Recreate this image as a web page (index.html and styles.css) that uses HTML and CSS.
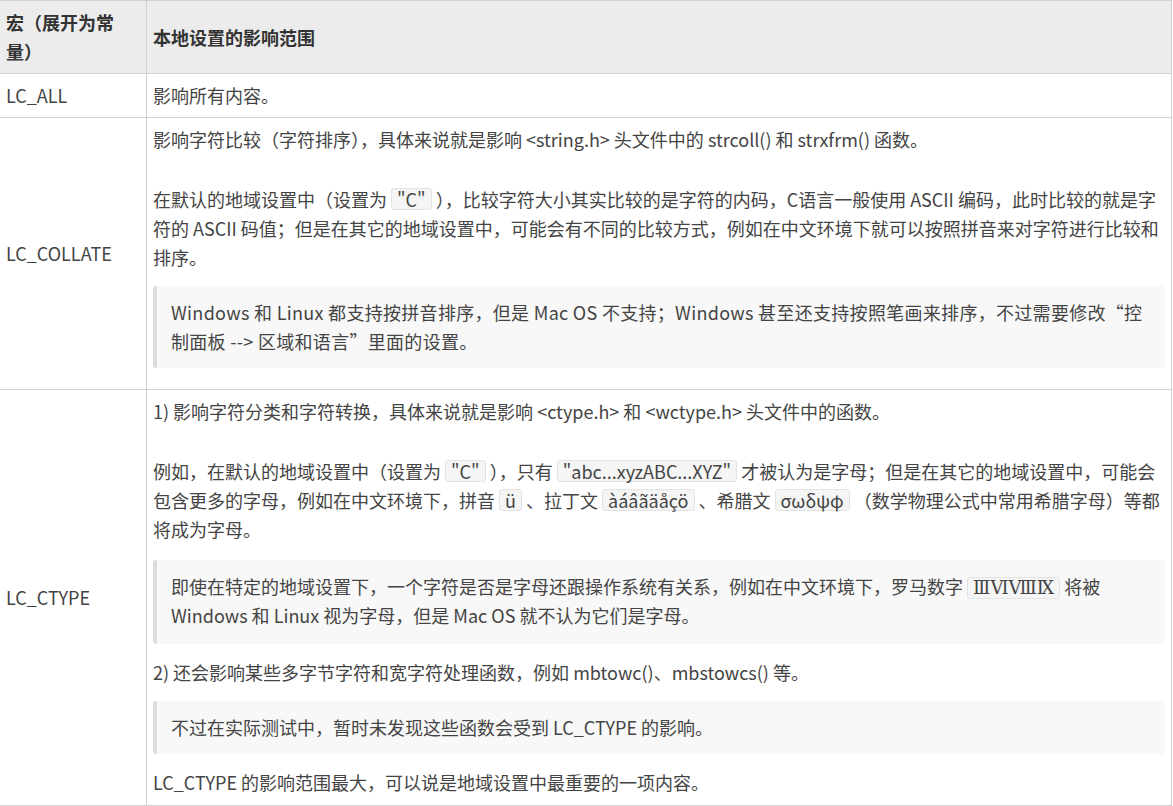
FILE: index.html
```html
<!DOCTYPE html>
<html lang="zh-CN">
<head>
  <meta charset="UTF-8" />
  <meta name="viewport" content="width=device-width, initial-scale=1.0"/>
  <title>本地设置的影响范围</title>
  <link rel="stylesheet" href="styles.css">
</head>
<body>

  <table class="locale-table">
    <tr>
      <th class="macro">宏（展开为常<br>量）</th>
      <th>本地设置的影响范围</th>
    </tr>
    <tr>
      <td class="macro">LC_ALL</td>
      <td><p>影响所有内容。</p></td>
    </tr>
    <tr>
      <td class="macro">LC_COLLATE</td>
      <td>
        <p class="gap">影响字符比较（字符排序），具体来说就是影响 &lt;string.h&gt; 头文件中的 strcoll() 和 strxfrm() 函数。</p>
        <p>在默认的地域设置中（设置为 <code>"C"</code> ），比较字符大小其实比较的是字符的内码，C语言一般使用 ASCII 编码，此时比较的就是字符的 ASCII 码值；但是在其它的地域设置中，可能会有不同的比较方式，例如在中文环境下就可以按照拼音来对字符进行比较和排序。</p>
        <blockquote class="wide">Windows 和 Linux 都支持按拼音排序，但是 Mac OS 不支持；Windows 甚至还支持按照笔画来排序，不过需要修改“控制面板 --&gt; 区域和语言”里面的设置。</blockquote>
      </td>
    </tr>
    <tr>
      <td class="macro">LC_CTYPE</td>
      <td class="last">
        <p class="gap">1) 影响字符分类和字符转换，具体来说就是影响 &lt;ctype.h&gt; 和 &lt;wctype.h&gt; 头文件中的函数。</p>
        <p class="letters">例如，在默认的地域设置中（设置为 <code>"C"</code> ），只有 <code>"abc...xyzABC...XYZ"</code> 才被认为是字母；但是在其它的地域设置中，可能会包含更多的字母，例如在中文环境下，拼音 <code>ü</code> 、拉丁文 <code>àáâãäåçö</code> 、希腊文 <code>σωδψφ</code> （数学物理公式中常用希腊字母）等都将成为字母。</p>
        <blockquote class="tall">即使在特定的地域设置下，一个字符是否是字母还跟操作系统有关系，例如在中文环境下，罗马数字 <code class="roman">ⅢⅥⅧⅨ</code> 将被 Windows 和 Linux 视为字母，但是 Mac OS 就不认为它们是字母。</blockquote>
        <p>2) 还会影响某些多字节字符和宽字符处理函数，例如 mbtowc()、mbstowcs() 等。</p>
        <blockquote>不过在实际测试中，暂时未发现这些函数会受到 LC_CTYPE 的影响。</blockquote>
        <p>LC_CTYPE 的影响范围最大，可以说是地域设置中最重要的一项内容。</p>
      </td>
    </tr>
  </table>

</body>
</html>
```

FILE: styles.css
```css
body {
  margin: 0;
  font-family: "Noto Sans CJK SC", "Noto Sans", sans-serif;
  font-size: 18px;
  line-height: 29px;
  color: #444;
  background-color: #fff;
}

/* Main table */
.locale-table {
  width: 1172px;
  border-collapse: collapse;
}

.locale-table th,
.locale-table td {
  border: 1px solid #d0d0d0;
  padding: 7px 6px;
  text-align: left;
  vertical-align: middle;
}

.locale-table th {
  background-color: #ececec;
  color: #333;
  font-weight: bold;
}

.locale-table .macro {
  width: 134px;
  border-left: none;
}

.locale-table td.last {
  padding-bottom: 8px;
}

p {
  margin: 0 0 14px;
}
p:last-child {
  margin-bottom: 0;
}
p.gap {
  margin-bottom: 31px;
}
p.letters {
  margin-bottom: 16px;
}

blockquote {
  margin: 0 0 14px;
  padding: 12px 14px;
  background-color: #f8f8f8;
  border-left: 4px solid #dcdcdc;
  border-radius: 3px;
}
blockquote.wide {
  letter-spacing: 0.3px;
}
blockquote.tall {
  padding-bottom: 14px;
}

code {
  display: inline-block;
  font-family: inherit;
  line-height: 20px;
  background-color: #f5f5f5;
  border: 1px solid #e3e3e3;
  border-radius: 3px;
  padding: 0 5px;
}

code.roman {
  font-family: "DejaVu Serif", serif;
}
```
